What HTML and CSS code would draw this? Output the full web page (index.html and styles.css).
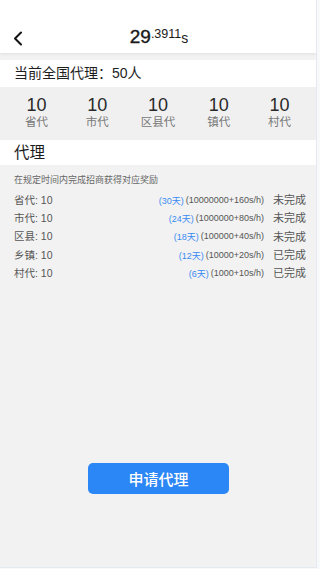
FILE: index.html
```html
<!DOCTYPE html>
<html lang="zh">
<head>
<meta charset="utf-8">
<meta name="viewport" content="width=320">
<link rel="stylesheet" href="styles.css">
</head>
<body>
<div class="page">
  <header class="header">
    <div class="back">
      <svg width="10" height="15" viewBox="0 0 10 15"><path d="M8 1.5 L2 7.5 L8 13.5" fill="none" stroke="#111" stroke-width="2" stroke-linecap="round" stroke-linejoin="round"/></svg>
    </div>
    <div class="title"><span class="t-big">29</span><span class="t-sup">.3911</span><span class="t-unit">s</span></div>
    <div class="spacer"></div>
  </header>

  <div class="total">当前全国代理：50人</div>

  <div class="stats">
    <div class="stat"><div class="num">10</div><div class="lbl">省代</div></div>
    <div class="stat"><div class="num">10</div><div class="lbl">市代</div></div>
    <div class="stat"><div class="num">10</div><div class="lbl">区县代</div></div>
    <div class="stat"><div class="num">10</div><div class="lbl">镇代</div></div>
    <div class="stat"><div class="num">10</div><div class="lbl">村代</div></div>
  </div>

  <div class="section-title">代理</div>

  <div class="desc">在规定时间内完成招商获得对应奖励</div>

  <div class="rows">
    <div class="row"><span class="name">省代:&nbsp;10</span><span class="info"><span class="days">(30天)</span><span class="rule">(10000000+160s/h)</span></span><span class="status">未完成</span></div>
    <div class="row"><span class="name">市代:&nbsp;10</span><span class="info"><span class="days">(24天)</span><span class="rule">(1000000+80s/h)</span></span><span class="status">未完成</span></div>
    <div class="row"><span class="name">区县:&nbsp;10</span><span class="info"><span class="days">(18天)</span><span class="rule">(100000+40s/h)</span></span><span class="status">未完成</span></div>
    <div class="row"><span class="name">乡镇:&nbsp;10</span><span class="info"><span class="days">(12天)</span><span class="rule">(10000+20s/h)</span></span><span class="status">已完成</span></div>
    <div class="row"><span class="name">村代:&nbsp;10</span><span class="info"><span class="days">(6天)</span><span class="rule">(1000+10s/h)</span></span><span class="status">已完成</span></div>
  </div>

  <div class="actions">
    <button class="apply">申请代理</button>
  </div>
</div>
</body>
</html>
```

FILE: styles.css
```css
html, body {
  margin: 0;
  padding: 0;
}
body {
  background: #f8f9fb;
  font-family: "Liberation Sans", "Noto Sans CJK SC", sans-serif;
  color: #222;
}
.page {
  width: 316px;
  height: 567px;
  background: #f2f2f2;
  border-right: 1px solid #e4e8ef;
  border-bottom: 1px solid #e4e8ef;
  overflow: hidden;
}
.header {
  height: 53px;
  background: #fff;
  box-shadow: 0 1px 3px rgba(0,0,0,0.08);
  display: grid;
  grid-template-columns: 40px 1fr 40px;
  align-items: center;
  padding-top: 21px;
  box-sizing: border-box;
}
.back {
  display: flex;
  align-items: center;
  padding-left: 13px;
  height: 32px;
}
.back svg { display: block; }
.title {
  text-align: center;
  line-height: 32px;
  color: #1a1a1a;
  white-space: nowrap;
  padding-left: 2px;
}
.t-big {
  font-size: 19px;
  -webkit-text-stroke: 0.4px #1a1a1a;
}
.t-sup {
  font-size: 12.5px;
  position: relative;
  top: -5px;
}
.t-unit {
  font-size: 14px;
}
.total {
  margin-top: 7px;
  background: #fff;
  height: 27px;
  line-height: 27px;
  padding: 0 14px;
  font-size: 14px;
  color: #1e1e1e;
}
.stats {
  display: grid;
  grid-template-columns: repeat(5, 1fr);
  padding: 8px 6px 11px;
  background: #f0f0f0;
}
.stat {
  text-align: center;
}
.num {
  font-size: 18px;
  line-height: 20px;
  color: #2a2a2a;
}
.lbl {
  font-size: 11.5px;
  line-height: 14px;
  color: #777;
}
.section-title {
  background: #fff;
  height: 25px;
  line-height: 25px;
  padding: 0 14px;
  font-size: 15.5px;
  color: #1a1a1a;
}
.desc {
  font-size: 9px;
  line-height: 14px;
  padding: 8px 14px 0;
  color: #666;
}
.rows {
  padding: 3px 10px 0 14px;
}
.row {
  display: flex;
  align-items: center;
  height: 18.3px;
}
.name {
  font-size: 10.5px;
  color: #555;
  flex: 1;
}
.info {
  font-size: 9px;
  white-space: nowrap;
}
.days {
  color: #3a8cf2;
  position: relative;
  top: 1px;
}
.rule {
  color: #555;
  margin-left: 2px;
}
.status {
  font-size: 11px;
  color: #555;
  margin-left: 8px;
  width: 34px;
  text-align: right;
  white-space: nowrap;
}
.actions {
  display: flex;
  justify-content: center;
  margin-top: 182px;
}
.apply {
  width: 141px;
  height: 31px;
  border: none;
  border-radius: 5px;
  background: #2b86f6;
  color: #fff;
  font-family: "Liberation Sans", "Noto Sans CJK SC", sans-serif;
  font-size: 15px;
  font-weight: 500;
  padding: 0;
  margin-left: 1px;
}
```
